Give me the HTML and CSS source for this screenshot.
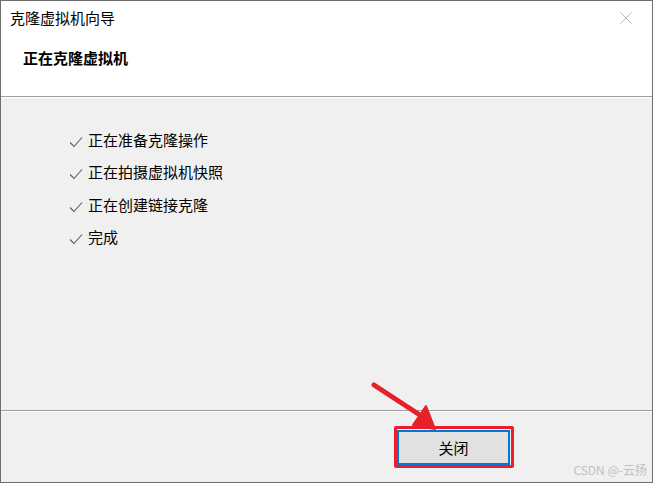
FILE: index.html
```html
<!DOCTYPE html>
<html lang="zh-CN">
<head>
<meta charset="utf-8">
<title>克隆虚拟机向导</title>
<link rel="stylesheet" href="styles.css">
</head>
<body>
<div class="window">
  <header class="header">
    <div class="titlebar">
      <span class="title">克隆虚拟机向导</span>
      <svg class="close" width="12" height="12" viewBox="0 0 12 12"><path d="M0.5 0.5 L11.5 11.5 M11.5 0.5 L0.5 11.5" stroke="#b4b4b4" stroke-width="1" fill="none"/></svg>
    </div>
    <h1 class="heading">正在克隆虚拟机</h1>
  </header>
  <main class="body">
    <ul class="steps">
      <li class="step"><svg class="check" width="14" height="12" viewBox="0 0 14 12"><path d="M1 6.5 L5 10.5 L13 1.5" stroke="#55606c" stroke-width="1.1" fill="none"/></svg><span>正在准备克隆操作</span></li>
      <li class="step"><svg class="check" width="14" height="12" viewBox="0 0 14 12"><path d="M1 6.5 L5 10.5 L13 1.5" stroke="#55606c" stroke-width="1.1" fill="none"/></svg><span>正在拍摄虚拟机快照</span></li>
      <li class="step"><svg class="check" width="14" height="12" viewBox="0 0 14 12"><path d="M1 6.5 L5 10.5 L13 1.5" stroke="#55606c" stroke-width="1.1" fill="none"/></svg><span>正在创建链接克隆</span></li>
      <li class="step"><svg class="check" width="14" height="12" viewBox="0 0 14 12"><path d="M1 6.5 L5 10.5 L13 1.5" stroke="#55606c" stroke-width="1.1" fill="none"/></svg><span>完成</span></li>
    </ul>
  </main>
  <footer class="footer">
    <button class="btn">关闭</button>
  </footer>
  <div class="highlight"></div>
  <svg class="arrow" width="80" height="60" viewBox="0 0 80 60">
    <path d="M3 3 L55 37" stroke="#e8202a" stroke-width="5" stroke-linecap="round" fill="none"/>
    <path d="M64 47 L42 43 L55 24 Z" fill="#e8202a" stroke="#e8202a" stroke-width="2" stroke-linejoin="round"/>
  </svg>
  <div class="watermark">CSDN @-云扬</div>
</div>
</body>
</html>
```
FILE: styles.css
```css
html, body {
  margin: 0;
  padding: 0;
  background: #ffffff;
}
body {
  font-family: "Noto Sans CJK SC", "Microsoft YaHei", sans-serif;
  color: #000;
}
.window {
  position: relative;
  width: 653px;
  height: 483px;
  box-sizing: border-box;
  border: 1px solid #6e6e6e;
  display: flex;
  flex-direction: column;
  background: #f0f0f0;
  overflow: hidden;
}
.header {
  height: 95px;
  background: #ffffff;
  border-bottom: 1px solid #a0a0a0;
  box-shadow: 0 1px 0 #ffffff;
  display: flex;
  flex-direction: column;
  flex: none;
}
.titlebar {
  height: 34px;
  display: flex;
  align-items: center;
  justify-content: space-between;
  padding: 0 20px 0 9px;
}
.title {
  font-size: 15px;
  line-height: 20px;
}
.close {
  display: block;
}
.heading {
  margin: 3px 0 0 22px;
  font-size: 15px;
  font-weight: bold;
  line-height: 40px;
}
.body {
  flex: 1;
  margin-top: 1px;
  border-bottom: 1px solid #a0a0a0;
  box-shadow: 0 1px 0 #ffffff;
}
.steps {
  list-style: none;
  margin: 0;
  padding: 25px 0 0 68px;
}
.step {
  display: flex;
  align-items: center;
  height: 32.5px;
  font-size: 15px;
}
.check {
  margin-right: 5px;
  margin-top: 5px;
  flex: none;
}
.footer {
  height: 70px;
  flex: none;
  margin-top: 1px;
  display: flex;
  align-items: flex-start;
  padding: 18px 0 0 396px;
  box-sizing: border-box;
}
.btn {
  width: 113px;
  height: 35px;
  box-sizing: border-box;
  border: 2px solid #0078d7;
  background: #e1e1e1;
  font-family: "Noto Sans CJK SC", "Microsoft YaHei", sans-serif;
  font-size: 15px;
  color: #000;
  padding: 0;
}
.highlight {
  position: absolute;
  left: 393px;
  top: 425px;
  width: 114px;
  height: 36px;
  border: 3px solid #ea1f2b;
  border-radius: 2px;
}
.arrow {
  position: absolute;
  left: 370px;
  top: 381px;
}
.watermark {
  position: absolute;
  right: 5px;
  top: 460px;
  font-size: 12px;
  color: #c0c0c0;
  font-family: "Noto Sans CJK SC", sans-serif;
}
```
